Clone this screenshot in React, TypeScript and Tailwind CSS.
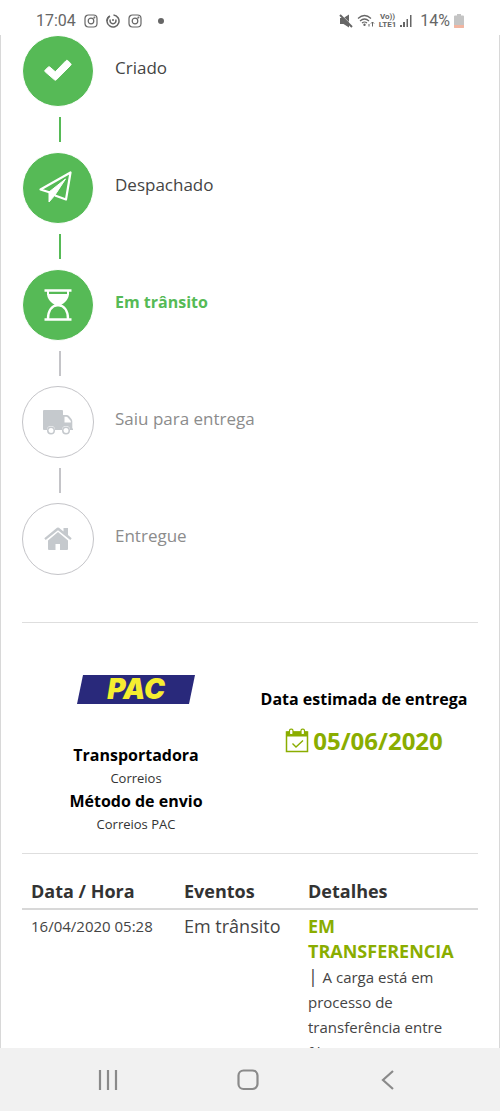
import type { ReactNode } from "react"

type StepState = "done" | "current" | "pending"

interface Step {
    label: string
    state: StepState
    icon: ReactNode
}

const CheckIcon = () => (
    <svg viewBox="0 0 28 24" className="w-7 h-6" fill="currentColor" stroke="currentColor" strokeLinejoin="round">
        <path d="M22 1.700c.6-.5 1.200-.5 1.800 0l2.900 2.800c.6.6.6 1.200 0 1.800L12.300 20.800c-.6.6-1.200.6-1.800 0L1.200 12.800c-.6-.6-.6-1.200 0-1.800l3-2.800c.6-.6 1.200-.6 1.800 0l5.300 4.600z" />
    </svg>
)

const PlaneIcon = () => (
    <svg viewBox="0 0 40 36" className="w-10 h-9" fill="none" stroke="currentColor" strokeWidth="2.200" strokeLinejoin="round">
        <path d="M12 22.500 2.500 19.500 32.500 2.500l-4.500 27-11-4" />
        <path d="M27.500 9 11 22v10l6-7z" fill="currentColor" strokeWidth="1" />
    </svg>
)

const HourglassIcon = () => (
    <svg viewBox="0 0 28 32" className="w-7 h-8" fill="none" stroke="currentColor">
        <path d="M.5 1.500h27M.5 30.500h27" strokeWidth="2.600" />
        <path d="M4 2v4M24 2v4" strokeWidth="2" />
        <path d="M3 5h22c-.5 5.500-4 8.500-8.500 11.500h-5C7 13.500 3.500 10.500 3 5z" fill="currentColor" stroke="none" />
        <path d="M4 30c0-9 4.500-13.500 10-14 5.500.5 10 5 10 14" strokeWidth="2.400" />
    </svg>
)

const TruckIcon = () => (
    <svg viewBox="0 0 30 25" className="w-[30px] h-[25px]" fill="currentColor">
        <path fillRule="evenodd" d="M1 0h18q1 0 1 1v4h3.500q1.500 0 2.500 1l2.500 3q.8 1 .8 2.500V18.500h.7V20h-3a4 4 0 1 0-8 0h-7a4 4 0 1 0-8 0H1q-1 0-1-1V1q0-1 1-1zm20.500 6.800v5.700h6.300v-1.500L24.500 7.300q-.5-.5-1-.5z" />
        <path fillRule="evenodd" d="M8 16.500a4 4 0 1 0 0 8 4 4 0 0 0 0-8zm0 1.500a2.500 2.500 0 1 1 0 5 2.500 2.500 0 0 1 0-5zM23 16.500a4 4 0 1 0 0 8 4 4 0 0 0 0-8zm0 1.500a2.500 2.500 0 1 1 0 5 2.500 2.500 0 0 1 0-5z" />
    </svg>
)

const HomeIcon = () => (
    <svg viewBox="0 0 28 24" className="w-7 h-6" fill="currentColor">
        <path d="M14 5 4 13.500V22q0 1 1 1h6.500v-6h4.500v6h7q1 0 1-1v-8.500z" />
        <path d="M13 .8q1-.8 2 0l4.500 3.700V1H24v7l3.700 3.300-1.400 1.700L14 3.200 1.700 13 .3 11.300z" />
    </svg>
)

const CalendarIcon = () => (
    <svg viewBox="0 0 24 26" className="w-6 h-[26px]" fill="none" stroke="currentColor">
        <path d="M1.500 4h21v19.500h-21z" strokeWidth="1.500" />
        <path d="M1.500 4h21v4h-21z" fill="currentColor" />
        <rect x="4.500" y="1.200" width="3.500" height="5.500" rx="1.500" fill="#fff" strokeWidth="1.200" />
        <rect x="16" y="1.200" width="3.500" height="5.500" rx="1.500" fill="#fff" strokeWidth="1.200" />
        <path d="m7.500 15.500 3.500 3.500 7-6.500" strokeWidth="1.400" />
    </svg>
)

const InstagramIcon = () => (
    <svg viewBox="0 0 14 14" className="size-3.5" fill="none" stroke="currentColor" strokeWidth="1.200">
        <rect x="1" y="1" width="12" height="12" rx="3.500" />
        <circle cx="7" cy="7" r="2.800" />
        <circle cx="10.400" cy="3.600" r=".4" />
    </svg>
)

const SpiralIcon = () => (
    <svg viewBox="0 0 14 14" className="size-3.5" fill="none" stroke="currentColor" strokeWidth="1.500">
        <path d="M7.500 1A6 6 0 1 1 3 2.500" />
        <path d="M4.300 5.500a3 3 0 1 0 5.400 0M7 5v2M1 7a6 6 0 0 1 3-5" />
    </svg>
)

const MuteIcon = () => (
    <svg viewBox="0 0 14 14" className="size-3.5" fill="currentColor">
        <path d="M1 4h3.500L10 .5v13L4.500 10H1z" />
        <path d="m2 .5 11.500 11.500" stroke="#fff" strokeWidth="1" />
        <path d="m1 1 12 12" stroke="currentColor" strokeWidth="2" />
    </svg>
)

const WifiIcon = () => (
    <svg viewBox="0 0 18 14" className="w-[18px] h-3.5" fill="none" stroke="currentColor" strokeWidth="1.200">
        <path d="M1 4.500q6.500-6 13 0M3 7q4.500-4 9 0M5 9q2.500-2 5 0" />
        <circle cx="7.500" cy="10.800" r=".6" fill="currentColor" />
        <path d="M15.500 12.500V8M14 9.500 15.500 8 17 9.500M12 10v2.500" strokeWidth="1" />
    </svg>
)

const SignalIcon = () => (
    <svg viewBox="0 0 12 14" className="w-3 h-3.5" fill="currentColor">
        <path d="M0 11h2v2H0zM3 8h2v5H3zM6.500 5h1.500v8H6.500zM10 1h1.500v12H10z" />
    </svg>
)

const BatteryIcon = () => (
    <svg viewBox="0 0 10 14" className="w-2.5 h-3.5">
        <path d="M3 0h4v1.500h2q1 0 1 1V13q0 1-1 1H1q-1 0-1-1V2.500q0-1 1-1h2z" fill="#c4c4c4" />
        <path d="M0 11h10v2q0 1-1 1H1q-1 0-1-1z" fill="#f2b5a0" />
    </svg>
)

const steps: Step[] = [
    { label: "Criado", state: "done", icon: <CheckIcon /> },
    { label: "Despachado", state: "done", icon: <PlaneIcon /> },
    { label: "Em trânsito", state: "current", icon: <HourglassIcon /> },
    { label: "Saiu para entrega", state: "pending", icon: <TruckIcon /> },
    { label: "Entregue", state: "pending", icon: <HomeIcon /> },
]

const circleStyle: Record<StepState, string> = {
    done: "bg-[#56ba56] text-white border-white",
    current: "bg-[#56ba56] text-white border-white",
    pending: "bg-white text-[#c5c9cd] border-[#c4c4c8]",
}

const labelStyle: Record<StepState, string> = {
    done: "text-[17px] text-[#444]",
    current: "text-base text-[#56ba56] font-bold",
    pending: "text-[17px] text-[#8c8c8c]",
}

function StatusBar() {
    return <header className="h-[35px] shrink-0 flex items-center justify-between px-9 pt-[6px] text-[#666] font-[Roboto,sans-serif]">
        <div className="flex items-center gap-2">
            <span className="text-base">17:04</span>
            <InstagramIcon />
            <SpiralIcon />
            <InstagramIcon />
            <span className="size-1.5 ml-2 rounded-full bg-[#666]"></span>
        </div>
        <div className="flex items-center gap-1">
            <MuteIcon />
            <WifiIcon />
            <div className="text-[8px] leading-[8px] font-bold text-center">
                <div>Vo))</div>
                <div>LTE1</div>
            </div>
            <SignalIcon />
            <span className="text-base pl-1">14%</span>
            <BatteryIcon />
        </div>
    </header>
}

function StepRow({ step, next }: { step: Step; next?: Step }) {
    return <li className="flex gap-[21px]">
        <div className="flex flex-col items-center">
            <div className={`size-[72px] rounded-full border flex items-center justify-center ${circleStyle[step.state]}`}>
                {step.icon}
            </div>
            {next && <Connector active={next.state !== "pending"} />}
        </div>
        <div className={`h-[66px] flex items-center ${labelStyle[step.state]}`}>{step.label}</div>
    </li>
}

function Connector({ active }: { active: boolean }) {
    return <div className={`w-0.5 h-[25px] mt-2.5 mb-2.5 ml-1 ${active ? "bg-[#56ba56]" : "bg-[#c4c4c8]"}`}></div>
}

function Shipping() {
    return <section className="grid grid-cols-2 border-y border-[#dedede] mt-[47px] text-center text-black">
        <div className="pt-[52px] pb-[18px]">
            <svg viewBox="0 0 118 30" className="w-[118px] h-[30px] mx-auto mb-[38px]" role="img" aria-label="PAC">
                <path d="M6 0h112l-6 29H0z" fill="#29297b" />
                <text x="59" y="24" textAnchor="middle" fontSize="28" fontWeight="900" fontStyle="italic" fill="#f5ee30" fontFamily="Inter, sans-serif">PAC</text>
            </svg>
            <div className="text-base leading-6 font-bold">Transportadora</div>
            <div className="text-[13px] leading-[22px] text-[#333]">Correios</div>
            <div className="text-base leading-6 font-bold">Método de envio</div>
            <div className="text-[13px] leading-[22px] text-[#333]">Correios PAC</div>
        </div>
        <div className="pt-16">
            <div className="text-base leading-6 font-bold">Data estimada de entrega</div>
            <div className="flex items-center justify-center gap-1 mt-3.5 text-2xl font-bold text-[#8aad00]">
                <CalendarIcon />
                05/06/2020
            </div>
        </div>
    </section>
}

function Events() {
    return <table className="w-full mt-[25px] text-left text-[#444] text-[18px] leading-[25px]">
        <thead>
            <tr className="border-b-2 border-[#d8d8d8] text-[#333]">
                <th className="pl-[9px] pb-1">Data / Hora</th>
                <th className="pl-[9px] pb-1">Eventos</th>
                <th className="pl-[9px] pb-1">Detalhes</th>
            </tr>
        </thead>
        <tbody>
            <tr className="align-top">
                <td className="w-[153px] pl-[9px] pt-1 text-[15px] whitespace-nowrap">16/04/2020 05:28</td>
                <td className="w-[124px] pl-[9px] pt-1 whitespace-nowrap">Em trânsito</td>
                <td className="px-[9px] pt-1">
                    <strong className="block text-[#8aad00]">EM TRANSFERENCIA</strong>
                    | <span className="text-[15px] leading-5">A carga está em processo de transferência entre filiais</span>
                </td>
            </tr>
        </tbody>
    </table>
}

function NavBar() {
    return <nav className="h-[63px] shrink-0 grid grid-cols-3 items-center justify-items-center pl-[38px] pr-[42px] bg-[#f1f1f1] text-[#8a8a8a]">
        <button aria-label="Recentes" className="p-2">
            <svg viewBox="0 0 20 20" className="size-5" stroke="currentColor" strokeWidth="2.200">
                <path d="M2 0v20M10 0v20M18 0v20" />
            </svg>
        </button>
        <button aria-label="Início" className="p-2">
            <svg viewBox="0 0 22 22" className="size-[22px]" fill="none" stroke="currentColor" strokeWidth="2.200">
                <rect x="1.500" y="1.500" width="19" height="18.500" rx="5" />
            </svg>
        </button>
        <button aria-label="Voltar" className="p-2">
            <svg viewBox="0 0 20 20" className="size-5" fill="none" stroke="currentColor" strokeWidth="2.200">
                <path d="M15 1 5 10l10 9" />
            </svg>
        </button>
    </nav>
}

export default function App() {
    return <div className="h-screen flex flex-col bg-white font-['Open_Sans',sans-serif]">
        <StatusBar />
        <main className="flex-1 min-h-0 overflow-hidden border-x border-[#d8d8d8] px-[21px]">
            <ol>
                {steps.map((step, i) => <StepRow key={step.label} step={step} next={steps[i + 1]} />)}
            </ol>
            <Shipping />
            <Events />
        </main>
        <NavBar />
    </div>
}
